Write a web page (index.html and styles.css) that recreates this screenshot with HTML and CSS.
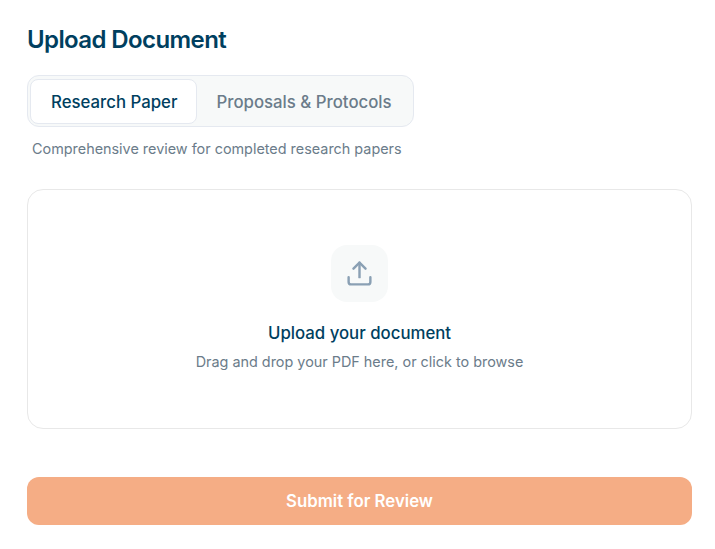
FILE: index.html
```html
<!DOCTYPE html>
<html lang="en">
<head>
    <meta charset="UTF-8">
    <meta name="viewport" content="width=device-width, initial-scale=1.0">
    <title>Upload Document</title>
    <link rel="stylesheet" href="styles.css">
</head>
<body>

    <div class="container">
        <h1>Upload Document</h1>

        <div class="tabs">
            <button class="tab active">Research Paper</button>
            <button class="tab">Proposals &amp; Protocols</button>
        </div>
        <p class="tab-note">Comprehensive review for completed research papers</p>

        <div class="dropzone">
            <div class="drop-icon">
                <svg width="29" height="29" viewBox="0 0 24 24" fill="none" stroke="#8aa0b4" stroke-width="2" stroke-linecap="round" stroke-linejoin="round">
                    <path d="M21 15v4a2 2 0 0 1-2 2H5a2 2 0 0 1-2-2v-4"/>
                    <path d="M17 8l-5-5-5 5"/>
                    <path d="M12 3v12"/>
                </svg>
            </div>
            <h3>Upload your document</h3>
            <p>Drag and drop your PDF here, or click to browse</p>
        </div>

        <button class="submit">Submit for Review</button>
    </div>

</body>
</html>
```

FILE: styles.css
```css
* {
    box-sizing: border-box;
}
body {
    margin: 0;
    font-family: Inter, "Liberation Sans", sans-serif;
    background-color: #ffffff;
    color: #003f5f;
}
.container {
    padding: 24px 23px 24px 27px;
}
h1 {
    margin: 0 0 19px;
    font-size: 24px;
    line-height: 32px;
    font-weight: 600;
    letter-spacing: -0.6px;
    color: #003f5f;
}
.tabs {
    display: inline-flex;
    height: 52px;
    padding: 3px 1px 3px 2px;
    background-color: #f7f9f9;
    border: 1px solid #e5e9f0;
    border-radius: 12px;
}
.tab {
    height: 45px;
    padding: 0 19px 0 18px;
    font-family: inherit;
    font-size: 16.8px;
    font-weight: 500;
    color: #6b7c8a;
    background: none;
    border: 1px solid transparent;
    border-radius: 8px;
}
.tab.active {
    padding: 0 19px 0 20px;
    color: #003f5f;
    background-color: #ffffff;
    border-color: #e5e9f0;
}
.tab-note {
    margin: 12px 0 0 5px;
    font-size: 14.4px;
    line-height: 20px;
    color: #6b7c8a;
}
.dropzone {
    display: flex;
    flex-direction: column;
    align-items: center;
    height: 240px;
    margin-top: 30px;
    padding-top: 55px;
    border: 1px solid #e8e8e8;
    border-radius: 16px;
}
.drop-icon {
    display: flex;
    align-items: center;
    justify-content: center;
    width: 57px;
    height: 57px;
    background-color: #f7f9f9;
    border-radius: 16px;
}
.dropzone h3 {
    margin: 19px 0 0;
    font-size: 16.8px;
    line-height: 24px;
    font-weight: 500;
    color: #003f5f;
}
.dropzone p {
    margin: 7px 0 0;
    font-size: 14.4px;
    line-height: 20px;
    color: #6b7c8a;
}
.submit {
    display: block;
    width: 100%;
    height: 48px;
    margin-top: 48px;
    font-family: inherit;
    font-size: 16.8px;
    font-weight: 600;
    color: #ffffff;
    background-color: #f5ad85;
    border: none;
    border-radius: 12px;
}
```
